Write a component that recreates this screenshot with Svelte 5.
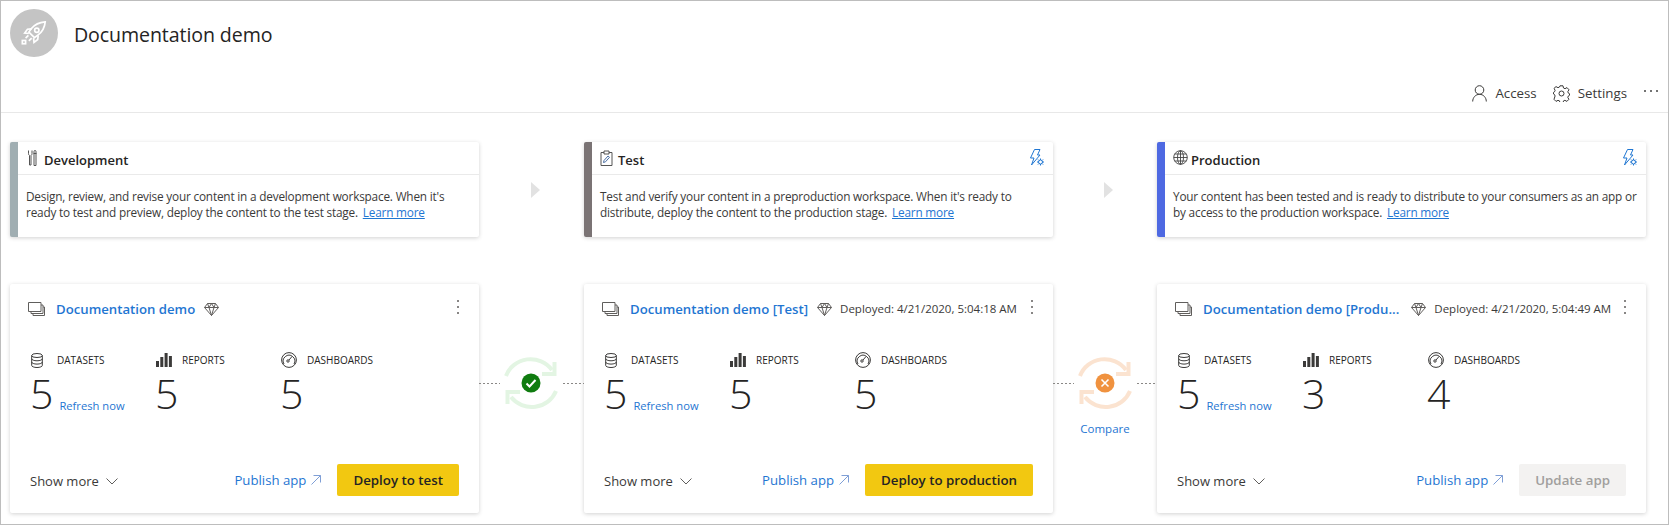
<script>
  const stages = [
    {
      name: 'Development', bar: '#a0aeb2', icon: 'tools', rule: false,
      text: "Design, review, and revise your content in a development workspace. When it's ready to test and preview, deploy the content to the test stage.",
    },
    {
      name: 'Test', bar: '#7a7374', icon: 'clip', rule: true,
      text: "Test and verify your content in a preproduction workspace. When it's ready to distribute, deploy the content to the production stage.",
    },
    {
      name: 'Production', bar: '#4e69e2', icon: 'globe', rule: true,
      text: 'Your content has been tested and is ready to distribute to your consumers as an app or by access to the production workspace.',
    },
  ]

  const workspaces = [
    { title: 'Documentation demo', deployed: '', counts: [5, 5, 5], action: 'Deploy to test', disabled: false },
    { title: 'Documentation demo [Test]', deployed: 'Deployed: 4/21/2020, 5:04:18 AM', counts: [5, 5, 5], action: 'Deploy to production', disabled: false },
    { title: 'Documentation demo [Produ...', deployed: 'Deployed: 4/21/2020, 5:04:49 AM', counts: [5, 3, 4], action: 'Update app', disabled: true },
  ]

  const labels = ['DATASETS', 'REPORTS', 'DASHBOARDS']
</script>

{#snippet rule_icon()}
  <svg class="rule" width="15" height="18" viewBox="0 0 15 18" fill="none" stroke="#1f76d2" stroke-width="1">
    <path d="M5.500 .5h5.500L8.500 6h2.500L2.500 16l2.500-7H1.500z" />
    <circle cx="11.500" cy="13" r="2" />
    <path d="M11.500 9.500v1.500M11.500 15v1.500M8 13h1.500M13.500 13H15M9 10.500l1 1M13 14.500l1 1M14 10.500l-1 1M10 14.500l-1 1" />
  </svg>
{/snippet}

{#snippet stage_icon(kind)}
  {#if kind === 'tools'}
    <svg class="dev" width="9" height="16" viewBox="0 0 9 16" fill="none" stroke="#555" stroke-width="1">
      <path d="M.5 .5v3q0 1.500 1 2v9.500h1.500V5.500q1-.5 1-2v-3" />
      <path d="M5.500 3.500h3M6 3.500v12h2v-12M6 3.500V1.500a1 1 0 0 1 2 0v2" />
    </svg>
  {:else if kind === 'clip'}
    <svg width="13" height="16" viewBox="0 0 13 16" fill="none" stroke="#555" stroke-width="1">
      <path d="M4 2.500H1v13h11v-13H9" />
      <path d="M4 1h5v3H4z" />
      <path d="M3.500 12.500l.5-2 4-4.500 1.500 1.300-4 4.500z" stroke="#4a6fa5" />
    </svg>
  {:else}
    <svg width="15" height="15" viewBox="0 0 15 15" fill="none" stroke="#444" stroke-width=".9">
      <circle cx="7.500" cy="7.500" r="6.800" />
      <ellipse cx="7.500" cy="7.500" rx="3" ry="6.800" />
      <path d="M7.500 .7v13.600M.7 7.500h13.600M1.700 4h11.600M1.700 11h11.600" />
    </svg>
  {/if}
{/snippet}

{#snippet stat_icon(i)}
  {#if i === 0}
    <svg width="12" height="15" viewBox="0 0 12 15" fill="none" stroke="#3b3a39" stroke-width="1">
      <ellipse cx="6" cy="2.500" rx="5.300" ry="2" />
      <path d="M.7 2.500v10c0 1 2.300 2 5.300 2s5.300-1 5.300-2v-10M.7 5.800c0 1 2.300 2 5.300 2s5.300-1 5.300-2M.7 9.100c0 1 2.300 2 5.300 2s5.300-1 5.300-2" />
    </svg>
  {:else if i === 1}
    <svg width="16" height="14" viewBox="0 0 16 14" fill="#3b3a39">
      <rect x="0" y="8" width="3" height="6" />
      <rect x="4.300" y="4" width="3" height="10" />
      <rect x="8.600" y="0" width="3" height="14" />
      <rect x="12.900" y="3" width="3" height="11" />
    </svg>
  {:else}
    <svg width="16" height="16" viewBox="0 0 16 16" fill="none" stroke="#3b3a39" stroke-width="1">
      <circle cx="8" cy="8" r="7.400" />
      <path d="M3 12a5.800 5.800 0 1 1 10 0" />
      <circle cx="7" cy="9" r="1.200" />
      <path d="M8 8l3-3.500" />
    </svg>
  {/if}
{/snippet}

{#snippet sync(color, badge, mark)}
  <div class="sync">
    <svg width="56" height="54" viewBox="0 0 56 54" fill="none">
      <g stroke={color} stroke-width="4">
        <path d="M3 20A26 25 0 0 1 49 14" />
        <path d="M53 35A26 25 0 0 1 8 41" />
      </g>
      <path d="M51.500 6v12H39" stroke={color} stroke-width="4" />
      <path d="M4.500 48V36H17" stroke={color} stroke-width="4" />
      <circle cx="28" cy="27" r="9.500" fill={badge} />
      {#if mark === 'check'}
        <path d="M23.500 27.500l3 3 6-6.500" stroke="#fff" stroke-width="2" />
      {:else}
        <path d="M24.500 23.500l7 7M31.500 23.500l-7 7" stroke="#fff" stroke-width="1.600" />
      {/if}
    </svg>
  </div>
{/snippet}

<div class="page">
  <header class="head">
    <div class="avatar">
      <svg width="28" height="28" viewBox="0 0 30 30" fill="none" stroke="#fff" stroke-width="1.800">
        <path d="M27 3c-6 .5-11 2.500-14.500 7L9.500 14l6 6 4-3c4.500-3.500 7-8.500 7.500-14z" />
        <circle cx="18" cy="12" r="2.300" />
        <path d="M12.500 10.500l-4.500 .5-3 4 4.500 .5M19.500 17.500l-.5 4.500-4 3-.5-4.500" />
        <rect x="2.500" y="23" width="3.500" height="3.500" />
        <path d="M9 17.500l-3 3M12.500 20.500l-3 3" />
      </svg>
    </div>
    <h1>Documentation demo</h1>
  </header>

  <div class="toolbar">
    <button>
      <svg width="15" height="17" viewBox="0 0 15 17" fill="none" stroke="#3b3a39" stroke-width="1">
        <circle cx="7.500" cy="5" r="4.300" />
        <path d="M.7 16.500c0-4 3-7.200 6.800-7.200s6.800 3.200 6.800 7.200" />
      </svg>
      Access
    </button>
    <button>
      <svg width="17" height="17" viewBox="0 0 17 17" fill="none" stroke="#3b3a39" stroke-width="1">
        <circle cx="8.500" cy="8.500" r="2.500" />
        <path d="M7 .8h3l.5 2.200 1.500.7 2-1.100 2 2.200-1.200 1.900.6 1.500 1.100.5v1.600l-1.100.6-.6 1.500 1.100 1.900-2 2.100-2-1.100-1.400.6-.5 2.200H7l-.5-2.200-1.500-.6-2 1.100-2-2.100L2.100 11 1.500 9.500l-1-.5V7.400l1-.6.600-1.500L1 3.400 3 1.600 5 2.700l1.500-.7z" />
      </svg>
      Settings
    </button>
    <span class="more"><i></i><i></i><i></i></span>
  </div>

  <section class="stages">
    {#each stages as stage, i}
      <article class="stage" style:border-left-color={stage.bar}>
        <div class="stage-head">
          <span class="stage-icon">{@render stage_icon(stage.icon)}</span>
          <h2>{stage.name}</h2>
          {#if stage.rule}{@render rule_icon()}{/if}
        </div>
        <p>{stage.text} <a href="#learn">Learn more</a></p>
      </article>
      {#if i < 2}
        <div class="next"><span></span></div>
      {/if}
    {/each}
  </section>

  <section class="flows">
    {#each workspaces as ws, i}
      <article class="card">
        <div class="card-head">
          <svg class="stack" width="17" height="14" viewBox="0 0 17 14" fill="none" stroke="#605e5c" stroke-width="1">
            <path d="M.5 .5h12.500v9H.5zM13 3h2v8.500H3V9.500M15 5h1.500v8.500H5v-2" />
          </svg>
          <a class="title" href="#ws">{ws.title}</a>
          <svg class="gem" width="15" height="13" viewBox="0 0 15 13" fill="none" stroke="#605e5c" stroke-width="1">
            <path d="M3.500 .5h8l3 4-7 8-7-8zM.5 4.500h14M5 4.500l2.500 8 2.500-8M3.500 .5l1.500 4 2.500-4 2.500 4 1.500-4" />
          </svg>
          {#if ws.deployed}<span class="deployed">{ws.deployed}</span>{/if}
          <span class="kebab"><i></i><i></i><i></i></span>
        </div>

        <div class="stats">
          {#each labels as label, n}
            <div class="stat">
              <div class="stat-label">
                <span class="stat-icon">{@render stat_icon(n)}</span>
                {label}
              </div>
              <div class="stat-value">
                <span class="num">{ws.counts[n]}</span>
                {#if n === 0}<a class="refresh" href="#refresh">Refresh now</a>{/if}
              </div>
            </div>
          {/each}
        </div>

        <div class="card-foot">
          <span class="show">Show more
            <svg width="12" height="7" viewBox="0 0 12 7" fill="none" stroke="#605e5c" stroke-width="1"><path d="M.5 .5L6 6l5.500-5.500" /></svg>
          </span>
          <a class="publish" href="#publish">Publish app
            <svg width="10" height="10" viewBox="0 0 10 10" fill="none" stroke="#7f9fd6" stroke-width="1"><path d="M.5 9.500l9-9M2.500 .5h7v7" /></svg>
          </a>
          <button class="deploy" disabled={ws.disabled}>{ws.action}</button>
        </div>
      </article>

      {#if i === 0}
        <div class="link">
          <span class="dots"></span>
          {@render sync('#e3f5e3', '#107c10', 'check')}
          <span class="dots"></span>
        </div>
      {:else if i === 1}
        <div class="link">
          <span class="dots"></span>
          {@render sync('#fbe3d0', '#f0923f', 'cross')}
          <span class="dots"></span>
          <a class="compare" href="#compare">Compare</a>
        </div>
      {/if}
    {/each}
  </section>
</div>

<style>
  :global(body) {
    margin: 0;
    background: #fff;
  }

  .page {
    box-sizing: border-box;
    width: 1669px;
    height: 525px;
    border: 1px solid #bdbdbd;
    font-family: "Open Sans", "Noto Sans", sans-serif;
    color: #252423;
    overflow: hidden;
  }

  a {
    color: #1f76d2;
    text-decoration: none;
  }

  .head {
    display: flex;
    align-items: center;
    height: 48px;
    padding: 8px 0 0 9px;
  }

  .avatar {
    display: flex;
    align-items: center;
    justify-content: center;
    width: 48px;
    height: 48px;
    border-radius: 50%;
    background: #c4c4c4;
  }

  h1 {
    margin: 2px 0 0 16px;
    font-size: 19.600px;
    font-weight: 500;
    letter-spacing: -0.1px;
  }

  .toolbar {
    display: flex;
    align-items: center;
    justify-content: flex-end;
    gap: 16px;
    height: 38px;
    padding: 17px 10px 0 0;
    border-bottom: 1px solid #e8e8e8;
  }

  .toolbar button {
    display: flex;
    align-items: center;
    gap: 8px;
    padding: 0;
    border: 0;
    background: none;
    color: #3b3a39;
    font: inherit;
    font-size: 13.300px;
  }

  .more {
    display: flex;
    gap: 4px;
    margin: 0 0 4px 1px;
  }

  .more i {
    width: 2px;
    height: 2px;
    border-radius: 50%;
    background: #444;
  }

  .stages, .flows {
    display: grid;
    grid-template-columns: 469px 105px 469px 104px 489px;
    padding-left: 9px;
  }

  .stages {
    margin-top: 29px;
  }

  .flows {
    margin-top: 47px;
  }

  .stage {
    box-sizing: border-box;
    height: 95px;
    border-left: 8px solid;
    border-radius: 2px;
    background: #fff;
    box-shadow: 0 1px 4px rgba(0, 0, 0, 0.18);
  }

  .stage-head {
    display: flex;
    align-items: center;
    height: 29px;
    padding: 3px 9px 0 8px;
    border-bottom: 1px solid #eaeaea;
  }

  .stage-icon {
    display: flex;
    width: 18px;
    margin-top: -4px;
  }

  .dev {
    margin-left: 2px;
  }

  .rule {
    margin-top: -4px;
  }

  h2 {
    flex: 1;
    margin: 0;
    font-size: 13px;
    font-weight: 600;
    color: #252423;
  }

  .stage p {
    margin: 13px 10px 0 8px;
    font-size: 11.800px;
    letter-spacing: -0.19px;
    line-height: 16px;
    color: #3b3a39;
  }

  .stage:last-child p {
    margin-right: 2px;
  }

  .stage p a {
    margin-left: 2px;
    text-decoration: underline;
  }

  .next {
    display: flex;
    align-items: center;
    justify-content: center;
    height: 95px;
  }

  .next span {
    margin-top: 1px;
    margin-left: 7px;
    border-style: solid;
    border-width: 8.500px 0 8.500px 9px;
    border-color: transparent transparent transparent #e2e2e2;
  }

  .card {
    box-sizing: border-box;
    display: flex;
    flex-direction: column;
    height: 229px;
    padding: 15px 20px 17px 18px;
    border-radius: 2px;
    background: #fff;
    box-shadow: 0 1px 4px rgba(0, 0, 0, 0.18);
  }

  .card-head {
    display: flex;
    align-items: center;
    height: 18px;
    margin-top: 1px;
  }

  .stack {
    margin-bottom: 1px;
  }

  .title {
    margin: -1px 0 0 11px;
    font-size: 13.200px;
    font-weight: 600;
    white-space: nowrap;
  }

  .card:last-child .title {
    margin-right: 3px;
  }

  .gem {
    margin-left: 9px;
  }

  .deployed {
    margin: -1px 0 0 8px;
    font-size: 11.500px;
    color: #3b3a39;
    white-space: nowrap;
  }

  .kebab {
    display: flex;
    flex-direction: column;
    gap: 4px;
    margin-left: auto;
    padding-bottom: 4px;
  }

  .kebab i {
    width: 2px;
    height: 2px;
    border-radius: 50%;
    background: #605e5c;
  }

  .stats {
    display: grid;
    grid-template-columns: repeat(3, 125px);
    margin-top: 34px;
    padding-left: 3px;
  }

  .stat-label {
    display: flex;
    align-items: center;
    height: 16px;
    font-size: 10px;
    color: #252423;
  }

  .stat-icon {
    display: flex;
    width: 26px;
  }

  .stat-value {
    display: flex;
    align-items: flex-end;
    margin-top: 6px;
  }

  .num {
    margin-left: -1px;
    font-size: 41px;
    font-weight: 300;
    line-height: 39px;
    color: #252423;
  }

  .refresh {
    margin: 0 0 0 6px;
    font-size: 11.200px;
  }

  .card-foot {
    display: flex;
    align-items: center;
    margin-top: auto;
  }

  .show {
    display: flex;
    align-items: center;
    gap: 7px;
    margin: 2px 0 0 2px;
    font-size: 13px;
    color: #3b3a39;
  }

  .publish {
    display: flex;
    align-items: center;
    gap: 5px;
    margin-left: auto;
    font-size: 13.200px;
  }

  .deploy {
    height: 32px;
    margin-left: 16px;
    padding: 0 16px;
    border: 0;
    border-radius: 2px;
    background: #f2c811;
    color: #252423;
    font: inherit;
    font-size: 13.300px;
    font-weight: 600;
    white-space: nowrap;
  }

  .deploy:disabled {
    background: #f3f2f1;
    color: #a19f9d;
  }

  .link {
    position: relative;
    display: flex;
    align-items: flex-start;
    justify-content: center;
    gap: 3px;
    padding-top: 72px;
  }

  .sync {
    width: 56px;
    height: 54px;
    margin-right: 1px;
  }

  .sync svg {
    display: block;
  }

  .dots {
    flex: 1;
    height: 1px;
    margin-top: 27px;
    background: repeating-linear-gradient(90deg, #8a8886 0 2px, transparent 2px 4px);
  }

  .compare {
    position: absolute;
    top: 137px;
    left: 0;
    right: 0;
    text-align: center;
    font-size: 11.500px;
  }
</style>
